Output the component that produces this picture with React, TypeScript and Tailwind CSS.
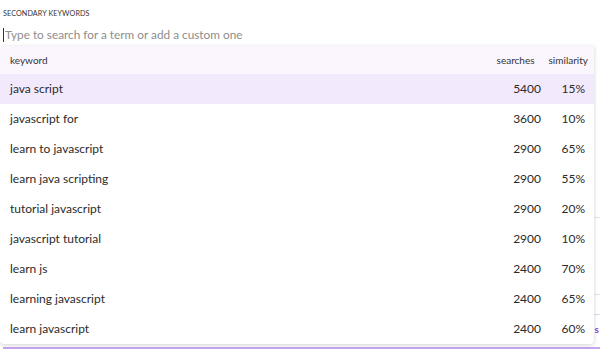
const rows = [
  { keyword: "java script", searches: 5400, similarity: 15 },
  { keyword: "javascript for", searches: 3600, similarity: 10 },
  { keyword: "learn to javascript", searches: 2900, similarity: 65 },
  { keyword: "learn java scripting", searches: 2900, similarity: 55 },
  { keyword: "tutorial javascript", searches: 2900, similarity: 20 },
  { keyword: "javascript tutorial", searches: 2900, similarity: 10 },
  { keyword: "learn js", searches: 2400, similarity: 70 },
  { keyword: "learning javascript", searches: 2400, similarity: 65 },
  { keyword: "learn javascript", searches: 2400, similarity: 60 },
];

export default function App() {
  return (
    <div className="relative w-[600px] h-[352px] overflow-hidden bg-white font-['Lato',sans-serif] text-[#2b2b2b]">
      {/* page behind the dropdown */}
      <div className="pl-[3px] pt-[9px]">
        <div className="text-[7.2px] leading-[10px] tracking-[0.1px] text-[#333] uppercase">
          Secondary keywords
        </div>
        <div className="mt-[8px] flex items-center h-[16px]">
          <span className="w-px h-[14px] bg-[#333]" />
          <input
            className="ml-px w-[400px] text-[11.8px] leading-[16px] outline-none placeholder:text-[#8d8d8d]"
            placeholder="Type to search for a term or add a custom one"
          />
        </div>
        <div className="h-[175px] border-b border-[#e3e3e3]" />
        <div className="h-[77px] border-b border-[#e3e3e3]" />
        <div className="h-[20px] border-b border-[#e2d3f6]" />
        <div className="h-[34px] border-b-2 border-[#c7a4f0] flex justify-end items-start pt-[9px] pr-px">
          <span className="text-[10px] font-bold text-[#8b3fd9] leading-none">s</span>
        </div>
      </div>

      {/* suggestions dropdown */}
      <div className="absolute left-0 top-[46px] w-[594px] bg-white rounded-b-[4px] shadow-[0_1px_4px_rgba(0,0,0,0.18)]">
        <div className="flex items-center h-[28px] bg-[#fbf6fe] text-[10px] text-[#333] pl-[10px] pr-[6px]">
          <div className="flex-1">keyword</div>
          <div>searches</div>
          <div className="ml-[14px]">similarity</div>
        </div>
        {rows.map((r, i) => (
          <div
            key={r.keyword}
            className={`flex items-center h-[30px] text-[12px] pl-[10px] pr-[9px] ${
              i === 0 ? "bg-[#f3e9fd]" : ""
            }`}
          >
            <div className="flex-1">{r.keyword}</div>
            <div className="w-[60px] text-right">{r.searches}</div>
            <div className="w-[44px] text-right">{r.similarity}%</div>
          </div>
        ))}
      </div>
    </div>
  );
}
